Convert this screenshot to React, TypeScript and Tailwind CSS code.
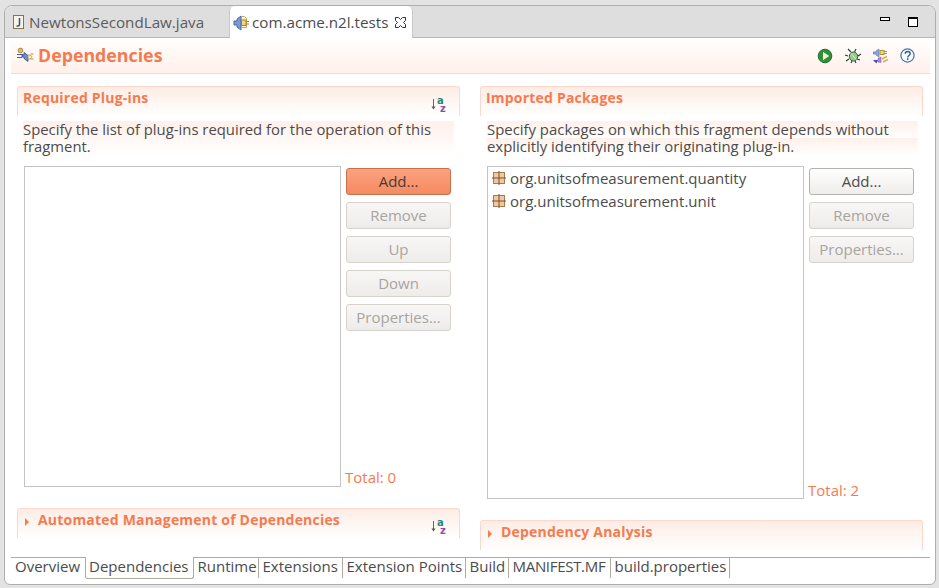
import React from 'react';

const font = "font-['Open_Sans','Noto_Sans',sans-serif]";

const JavaFileIcon = () => (
  <svg width="16" height="16" viewBox="0 0 16 16" className="shrink-0">
    <rect x="2.5" y="1.5" width="10" height="13" fill="#f7f3e6" stroke="#8a7440" />
    <path d="M8.5 4v6.5q0 1.5-1.5 1.5H5.5" fill="none" stroke="#2f4f8f" strokeWidth="1.5" />
  </svg>
);

const FragmentIcon = () => (
  <svg width="16" height="16" viewBox="0 0 16 16" className="shrink-0">
    <path d="M1 6h3V4l4-3v14l-4-3v-2H1z" fill="#7d9bd2" stroke="#3e62a8" strokeWidth="0.9" />
    <path d="M8.5 1.5h3l2 2v9h-5z" fill="#fbf3d6" stroke="#b5963c" strokeWidth="0.8" />
    <rect x="8.5" y="5" width="4.5" height="5.5" fill="#f2d67c" stroke="#a8842c" />
    <path d="M13 6.5h3M13 9h3" stroke="#a8842c" />
  </svg>
);

const DependenciesIcon = () => (
  <svg width="17" height="17" viewBox="0 0 17 17" className="shrink-0">
    <circle cx="3.5" cy="3.5" r="2.4" fill="#e8b66a" stroke="#9a7028" strokeWidth="0.7" />
    <path d="M0 7.5h6M0 10.5h5" stroke="#3f5f9f" />
    <path d="M5 8h2V5.5l4 3v6l-4-3V10H5z" fill="#6f8fd0" stroke="#2f4f96" strokeWidth="0.8" />
    <path d="M11 8h2l2 1.5-2 2.5h-2z" fill="#fbf0c8" stroke="#b5963c" strokeWidth="0.8" />
    <path d="M13.5 7h3M13.5 12h3" stroke="#b5963c" />
  </svg>
);

const RunIcon = () => (
  <svg width="16" height="16" viewBox="0 0 16 16">
    <circle cx="8" cy="8" r="6.8" fill="#2f8f3c" stroke="#1f6e2c" />
    <path d="M6 3.8L12.2 8 6 12.2z" fill="#eef6c8" />
  </svg>
);

const DebugIcon = () => (
  <svg width="18" height="16" viewBox="0 0 18 16">
    <path d="M4 1l3 3M12 1l-1.5 3M1 7l3 1M17 6l-3 2M2 13l3-2M16 12l-3-1M7 15l1-2M12 15l-1-2" stroke="#1d3f3a" strokeWidth="1.1" />
    <ellipse cx="9.5" cy="8.5" rx="4.2" ry="4.5" fill="#9cc98c" stroke="#2e5e4a" />
    <path d="M7 5.5l5 6" stroke="#d8ecc8" />
  </svg>
);

const PluginsIcon = () => (
  <svg width="16" height="16" viewBox="0 0 16 16">
    <path d="M0 4h3V3l3-2v8L3 7V6H0z" fill="#8ea4dc" stroke="#5a74b8" strokeWidth="0.6" />
    <rect x="7" y="2.5" width="4" height="4" fill="#f0d48a" stroke="#b0922c" />
    <path d="M11 3.5h3M11 5.5h3" stroke="#b0922c" />
    <path d="M0 12h5l-1.5 3.5z" fill="#2f55b8" />
    <path d="M5 10.5l3-1.5v5.5l-3-.5z" fill="#b78ad0" stroke="#8a5aa8" strokeWidth="0.6" />
    <path d="M9 11l5-2.5M10 14l5-2.5" stroke="#d0b060" strokeWidth="1.4" />
  </svg>
);

const HelpIcon = () => (
  <svg width="15" height="15" viewBox="0 0 15 15">
    <circle cx="7.5" cy="7.5" r="6.6" fill="#f8fbfe" stroke="#3f76aa" strokeWidth="1.2" />
    <path d="M5.2 5.8c0-3 5-3 5 0 0 1.8-2.5 1.7-2.5 3.6" fill="none" stroke="#2f5f98" strokeWidth="1.4" />
    <rect x="6.9" y="10.3" width="1.6" height="1.6" fill="#2f5f98" />
  </svg>
);

const CloseIcon = () => (
  <svg width="11" height="11" viewBox="0 0 11 11" className="shrink-0">
    <path d="M.5.5h3l2 2 2-2h3v3l-2 2 2 2v3h-3l-2-2-2 2h-3v-3l2-2-2-2z" fill="white" stroke="#333" />
  </svg>
);

const SortIcon = () => (
  <svg width="17" height="17" viewBox="0 0 17 17" className="shrink-0">
    <path d="M2.5 3v9" stroke="#666" />
    <path d="M0.5 10.5h4l-2 3z" fill="#555" />
    <text x="6" y="8" fontSize="10" fontWeight="700" fill="#1f8a78" fontFamily="'DejaVu Sans',sans-serif">a</text>
    <text x="9" y="16" fontSize="10" fontWeight="700" fill="#8f4f9f" fontFamily="'DejaVu Sans',sans-serif">z</text>
  </svg>
);

const PackageIcon = () => (
  <svg width="14" height="14" viewBox="0 0 14 14" className="shrink-0">
    <rect x="1.5" y="1.5" width="11" height="11" fill="#ecc9a2" stroke="#a87c4c" />
    <path d="M7 0v14M0 7h14" stroke="#7f4f2a" />
  </svg>
);

const SectionHead = ({ title, twisty, sort }: { title: string; twisty?: boolean; sort?: boolean }) => (
  <div className="relative flex h-[30px] rounded-t-[3px] border-x border-t border-[#fbd9cc] bg-gradient-to-b from-[#fdece5] to-white pl-[5px] pt-[1px]">
    {twisty && <span className="mr-[6px] ml-[2px] mt-[8px] h-0 w-0 border-y-[4px] border-l-[4px] border-y-transparent border-l-[#f47d50]" />}
    <span className={`text-[14px] leading-[20px] font-bold tracking-[0.2px] text-[#f47b50] ${twisty ? 'ml-[3px]' : ''}`}>{title}</span>
    {sort && <span className="absolute top-[9px] right-[11px]"><SortIcon /></span>}
  </div>
);

const Btn = ({ label, disabled, hot }: { label: string; disabled?: boolean; hot?: boolean }) => (
  <div
    className={`flex h-[27px] w-[105px] items-center justify-center rounded-[3px] border text-[15px] ${
      hot
        ? 'border-[#c9714f] bg-gradient-to-b from-[#fba27f] to-[#f58a61] text-[#4a3a35]'
        : disabled
          ? 'border-[#d6d2cc] bg-gradient-to-b from-[#f8f7f6] to-[#eeecea] text-[#a8a4a0]'
          : 'border-[#b5b1ac] bg-gradient-to-b from-white to-[#efedeb] text-[#4c4c4c]'
    }`}
  >
    {label}
  </div>
);

const tabBase = 'flex h-[20px] items-center whitespace-nowrap pb-[3px]';
const tabCell = `${tabBase} border-r border-[#b5a99c] pl-[4px]`;

const tabs = [
  { label: 'Overview', cls: `${tabBase} pr-[5px] pl-[4px]` },
  { label: 'Dependencies', cls: 'mt-[-1px] flex h-[22px] items-center rounded-b-[3px] border-x border-b border-[#b5a99c] bg-white pr-[4px] pb-[3px] pl-[3px]' },
  { label: 'Runtime', cls: `${tabCell} w-[65px]` },
  { label: 'Extensions', cls: `${tabCell} w-[84px]` },
  { label: 'Extension Points', cls: `${tabCell} w-[123px]` },
  { label: 'Build', cls: `${tabCell} w-[43px]` },
  { label: 'MANIFEST.MF', cls: `${tabCell} w-[102px] tracking-[-0.3px]` },
  { label: 'build.properties', cls: `${tabCell} w-[119px]` },
];

export default function App() {
  return (
    <div className={`h-[588px] w-[939px] overflow-hidden bg-[#e3e3e3] pt-[5px] pr-[3px] pb-[3px] pl-[4px] text-[#4c4c4c] ${font}`}>
      <div className="flex h-full flex-col overflow-hidden rounded-t-[8px] rounded-b-[6px] border border-[#aeaeae] bg-white">
        {/* editor tabs */}
        <div className="flex h-[32px] shrink-0 items-start border-b border-[#b5b5b5] bg-[#dedede]">
          <div className="flex h-[31px] w-[224px] items-center gap-[2px] pt-[1px] pl-[6px] text-[15.2px] text-[#5c5c5c]">
            <JavaFileIcon />
            <span>NewtonsSecondLaw.java</span>
          </div>
          <div className="flex h-[32px] w-[184px] items-center gap-[3px] rounded-t-[5px] border-x border-[#c8c8c8] bg-white pt-[1px] pl-[3px] text-[15.2px]">
            <FragmentIcon />
            <span>com.acme.n2l.tests</span>
            <span className="ml-[4px]"><CloseIcon /></span>
          </div>
          <div className="ml-auto flex items-start gap-[18px] pt-[11px] pr-[17px]">
            <span className="h-[4px] w-[10px] border border-black bg-white" />
            <span className="h-[10px] w-[10px] border border-t-[2px] border-black bg-white" />
          </div>
        </div>

        {/* form title */}
        <div className="mr-[5px] ml-[6px] flex h-[36px] shrink-0 items-center border-b border-[#fbd9cc] bg-gradient-to-b from-white to-[#fff0ea] pr-[15px] pl-[6px]">
          <DependenciesIcon />
          <span className="mb-[1px] ml-[4px] text-[17.8px] font-bold text-[#f47b50]">Dependencies</span>
          <div className="ml-auto flex items-center gap-[11px]">
            <RunIcon />
            <DebugIcon />
            <PluginsIcon />
            <HelpIcon />
          </div>
        </div>

        {/* body */}
        <div className="flex flex-1 gap-[20px] pt-[12px] pr-[11px] pl-[12px]">
          <div className="flex w-[443px] flex-col">
            <SectionHead title="Required Plug-ins" sort />
            <div className="mt-[5px] ml-[6px] h-[45px] text-[14.85px] leading-[17px]">
              <p className="w-[431px] bg-gradient-to-b from-[#fff0ea] to-white">Specify the list of plug-ins required for the operation of this<br />fragment.</p>
            </div>
            <div className="ml-[7px] flex h-[321px] gap-[5px]">
              <div className="h-full w-[317px] border border-[#c4c4c4]" />
              <div className="flex flex-1 flex-col">
                <div className="mt-[2px] flex flex-col gap-[7px]">
                  <Btn label="Add..." hot />
                  <Btn label="Remove" disabled />
                  <Btn label="Up" disabled />
                  <Btn label="Down" disabled />
                  <Btn label="Properties..." disabled />
                </div>
                <span className="mt-auto mb-[1px] -ml-[1px] text-[15px] leading-[18px] text-[#f47b50]">Total: 0</span>
              </div>
            </div>
            <div className="mt-[21px]">
              <SectionHead title="Automated Management of Dependencies" twisty sort />
            </div>
          </div>

          <div className="flex w-[443px] flex-col">
            <SectionHead title="Imported Packages" />
            <div className="mt-[5px] ml-[7px] h-[45px] text-[14.9px] leading-[17px]">
              <p className="w-[431px] bg-gradient-to-b from-[#fff0ea] to-white">Specify packages on which this fragment depends without</p>
              <p className="w-[431px] bg-gradient-to-b from-[#fff0ea] to-white">explicitly identifying their originating plug-in.</p>
            </div>
            <div className="ml-[7px] flex h-[333px] gap-[5px]">
              <div className="flex h-full w-[317px] flex-col gap-[5px] border border-[#c4c4c4] pt-[2px] pl-[4px] text-[15px]">
                <div className="flex h-[18px] items-center gap-[4px]"><PackageIcon /><span>org.unitsofmeasurement.quantity</span></div>
                <div className="flex h-[18px] items-center gap-[4px]"><PackageIcon /><span>org.unitsofmeasurement.unit</span></div>
              </div>
              <div className="flex flex-1 flex-col">
                <div className="mt-[2px] flex flex-col gap-[7px]">
                  <Btn label="Add..." />
                  <Btn label="Remove" disabled />
                  <Btn label="Properties..." disabled />
                </div>
                <span className="mt-auto -ml-[1px] text-[15px] leading-[18px] text-[#f47b50]">Total: 2</span>
              </div>
            </div>
            <div className="mt-[21px]">
              <SectionHead title="Dependency Analysis" twisty />
            </div>
          </div>
        </div>

        {/* page tabs */}
        <div className="mr-[5px] mb-[6px] ml-[6px] flex h-[21px] shrink-0 border-t border-[#b5a99c] text-[15px]">
          {tabs.map((t) => (
            <div key={t.label} className={t.cls}>
              {t.label}
            </div>
          ))}
        </div>
      </div>
    </div>
  );
}
